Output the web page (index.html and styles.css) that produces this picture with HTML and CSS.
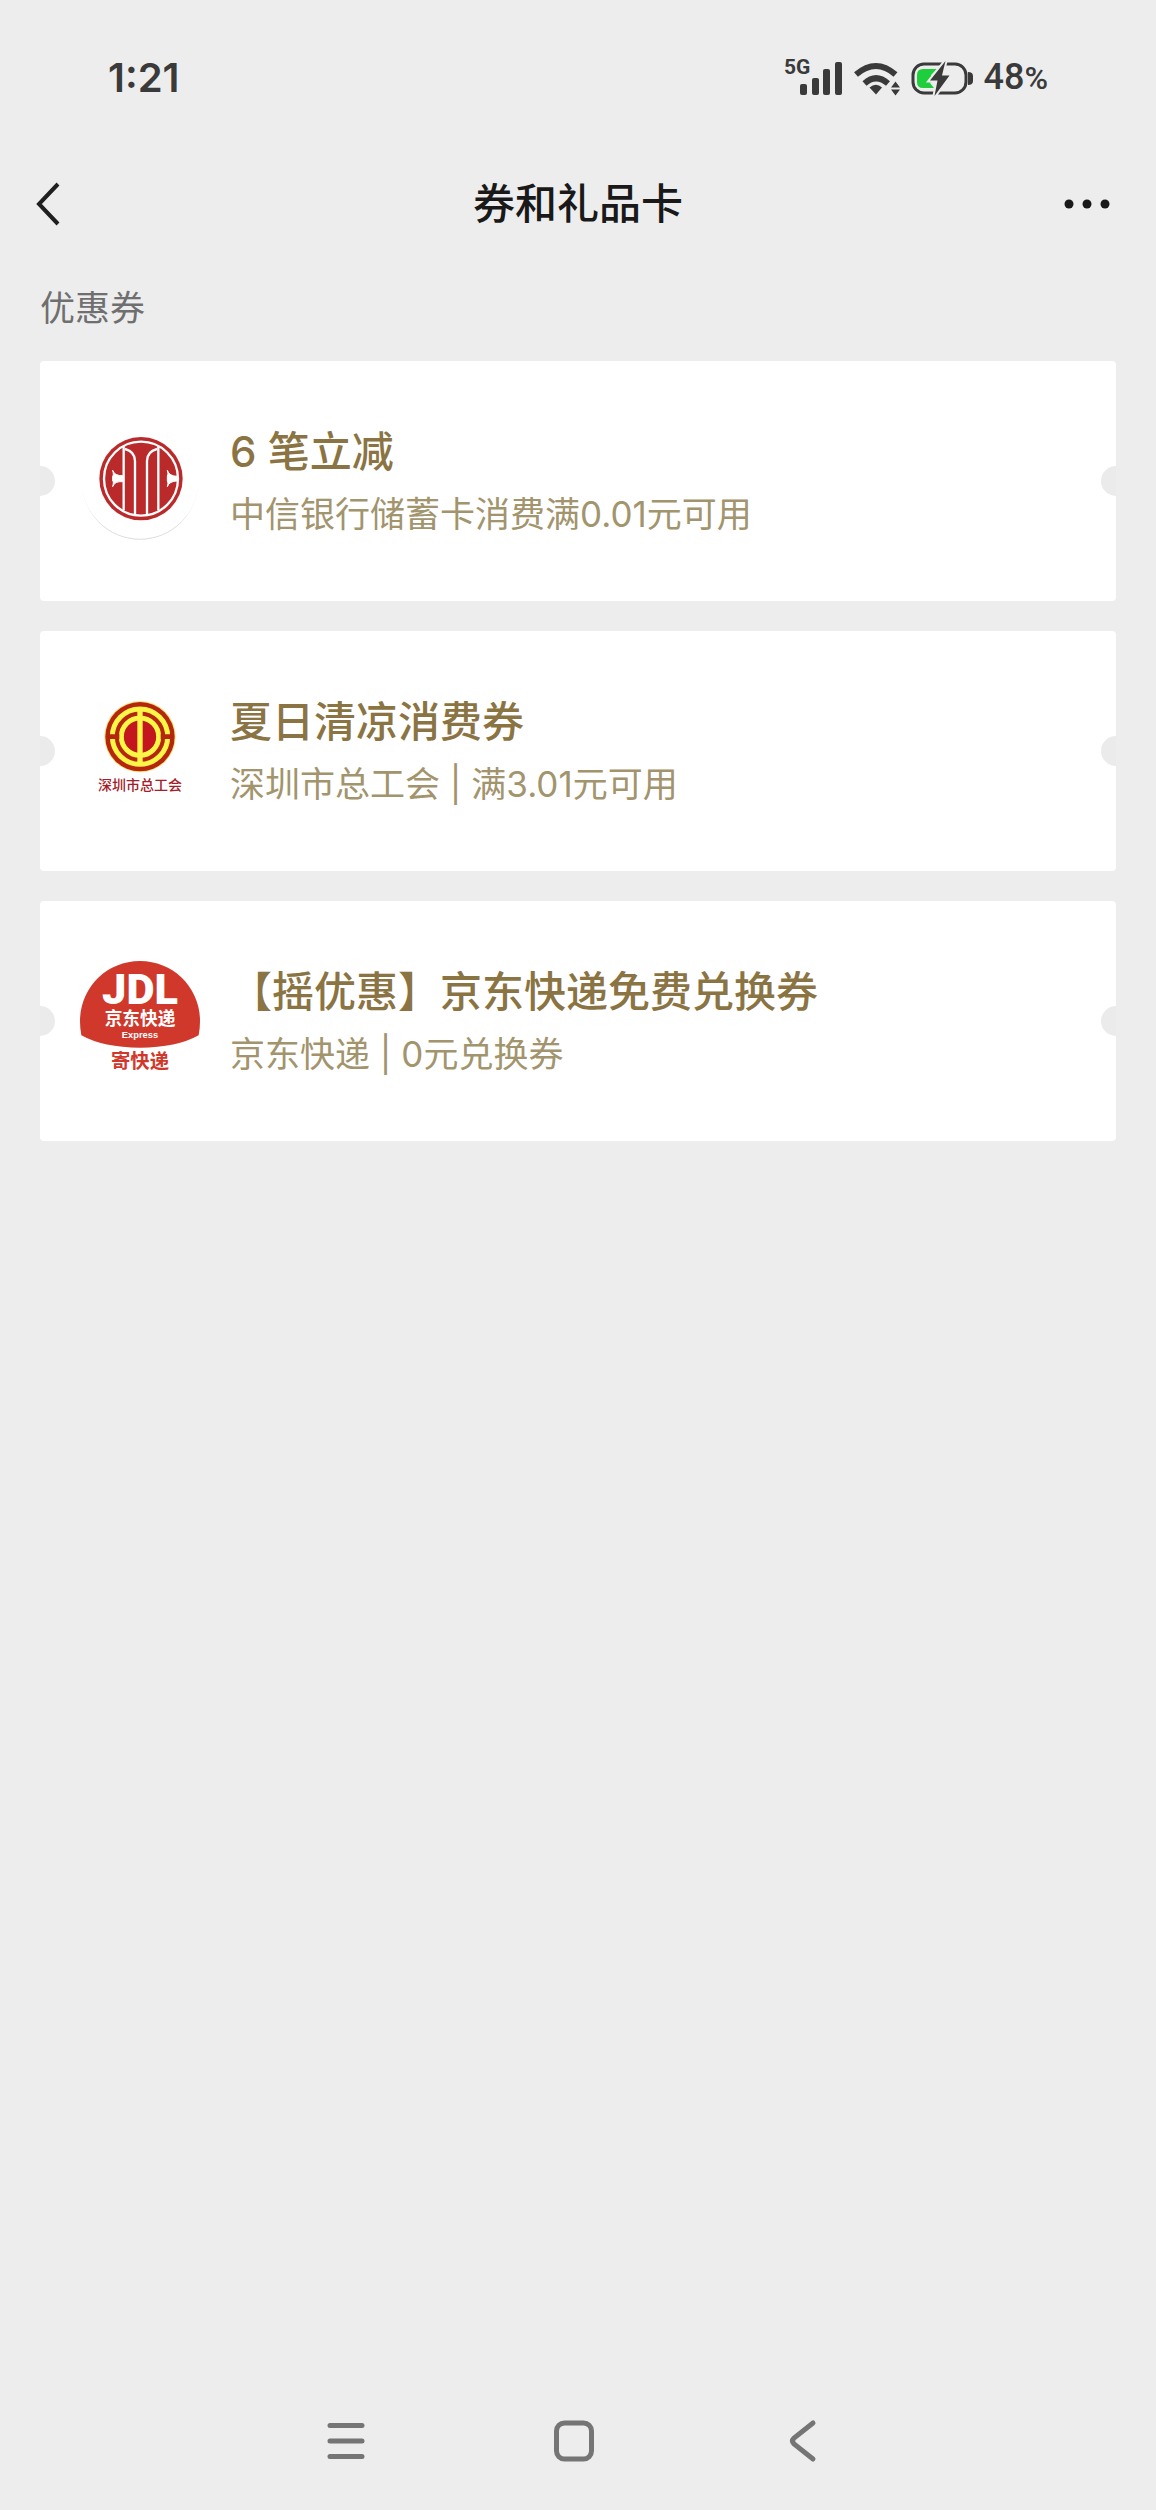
FILE: index.html
```html
<!DOCTYPE html>
<html lang="zh-CN">
<head>
    <meta charset="UTF-8">
    <meta name="viewport" content="width=device-width, initial-scale=1.0">
    <title>券和礼品卡</title>
    <link rel="stylesheet" href="styles.css">
</head>
<body>
    <div class="status-bar">
        <span class="time">1:21</span>
        <div class="status-icons">
            <svg width="58" height="42" viewBox="0 0 58 42" fill="#3a3a3a">
                <text class="network" x="0" y="18">5G</text>
                <rect x="16" y="28" width="7" height="11" rx="2"/>
                <rect x="28" y="22" width="7" height="17" rx="2"/>
                <rect x="39" y="13" width="7" height="26" rx="2"/>
                <rect x="51" y="6" width="7" height="33" rx="2"/>
            </svg>
            <svg width="48" height="42" viewBox="0 0 48 42" fill="#3a3a3a">
                <path d="M4 18.500Q24 1.500 43.500 18.500" fill="none" stroke="#3a3a3a" stroke-width="6"/>
                <path d="M12.500 27.500Q24 17 36 27.500" fill="none" stroke="#3a3a3a" stroke-width="6"/>
                <path d="M17.500 31.500Q24 26 30 31.500L24 38.500Z"/>
                <path d="M43.500 25.500L48 31.500H39Z M39 33.500H48L43.500 39.500Z"/>
            </svg>
            <svg width="64" height="42" viewBox="0 0 64 42">
                <rect x="3" y="8" width="53" height="29" rx="11" fill="none" stroke="#3a3a3a" stroke-width="3"/>
                <path d="M58 16Q63 16 63 20V25Q63 29 58 29Z" fill="#3a3a3a"/>
                <path d="M13 13H27L21 19L24 23L20 27L24 32H13Q7 32 7 26V19Q7 13 13 13Z" fill="#1fce3d"/>
                <path d="M35.500 5L20 24.500H27.500L24.500 40L39.500 19.500H32Z" fill="#3a3a3a" stroke="#ededed" stroke-width="4" paint-order="stroke"/>
            </svg>
            <span class="battery">48<small>%</small></span>
        </div>
    </div>

    <header class="header">
        <button class="icon-btn" aria-label="返回">
            <svg width="28" height="46" viewBox="0 0 28 46" fill="none" stroke="#1f1f1f" stroke-width="4">
                <path d="M23 3L4 23L23 43"/>
            </svg>
        </button>
        <h1>券和礼品卡</h1>
        <button class="icon-btn" aria-label="更多">
            <svg width="46" height="46" viewBox="0 0 46 46" fill="#191919">
                <circle cx="5" cy="23" r="4.500"/>
                <circle cx="23" cy="23" r="4.500"/>
                <circle cx="41" cy="23" r="4.500"/>
            </svg>
        </button>
    </header>

    <main class="content">
        <h2>优惠券</h2>
        <div class="coupons">
            <a class="coupon" href="#">
                <svg class="logo" viewBox="0 0 360 360">
                    <circle cx="180" cy="182" r="174" fill="#dcdcdc"/>
                    <circle cx="180" cy="177" r="176" fill="#fff"/>
                    <circle cx="183" cy="173" r="125" fill="#bb2a2b"/>
                    <g fill="none" stroke="#fff" stroke-width="7">
                        <circle cx="183" cy="173" r="111"/>
                        <path d="M131 76V268M235 76V268"/>
                        <path d="M135 84Q165 92 165 120V282M231 84Q201 92 201 120V282"/>
                    </g>
                    <path d="M98 148Q104 165 128 164V182Q104 180 98 197Q102 182 98 180V165Q102 163 98 148Z" fill="#fff" stroke="#fff" stroke-width="3"/>
                    <path d="M262 148Q268 166 293 166V180Q268 180 262 197Q266 184 262 180V165Q266 161 262 148Z" fill="#fff" stroke="#fff" stroke-width="3"/>
                </svg>
                <div class="info">
                    <h3>6 笔立减</h3>
                    <p>中信银行储蓄卡消费满0.01元可用</p>
                </div>
            </a>

            <a class="coupon" href="#">
                <svg class="logo" viewBox="0 0 360 360">
                    <circle cx="180" cy="137" r="107" fill="#fbe27a"/>
                    <circle cx="180" cy="137" r="104" fill="#b5260f"/>
                    <g fill="none" stroke="#fdf647" stroke-width="15">
                        <circle cx="180" cy="137" r="83"/>
                        <circle cx="180" cy="137" r="56"/>
                    </g>
                    <path d="M85 137H118M242 137H275" stroke="#b5260f" stroke-width="14"/>
                    <circle cx="180" cy="137" r="47" fill="#c3161f"/>
                    <path d="M180 55V220" stroke="#fdf647" stroke-width="16"/>
                    <text class="union" x="180" y="297">深圳市总工会</text>
                </svg>
                <div class="info">
                    <h3>夏日清凉消费券</h3>
                    <p>深圳市总工会 | 满3.01元可用</p>
                </div>
            </a>

            <a class="coupon" href="#">
                <svg class="logo" viewBox="0 0 360 360">
                    <path d="M180 0C280 0 360 80 360 180Q360 203 356 223Q290 260 180 260Q70 260 4 223Q0 203 0 180C0 80 80 0 180 0Z" fill="#d0382b"/>
                    <text class="jdl" x="180" y="130">JDL</text>
                    <text class="jd-name" x="180" y="193">京东快递</text>
                    <text class="jd-express" x="180" y="232">Express</text>
                    <text class="jd-send" x="180" y="320">寄快递</text>
                </svg>
                <div class="info">
                    <h3>【摇优惠】京东快递免费兑换券</h3>
                    <p>京东快递 | 0元兑换券</p>
                </div>
            </a>
        </div>
    </main>

    <nav class="nav-bar">
        <button class="icon-btn" aria-label="菜单">
            <svg width="44" height="44" viewBox="0 0 44 44" fill="none" stroke="#757575" stroke-width="5" stroke-linecap="round">
                <path d="M6 6.500H38M6 22H38M6 37.500H38"/>
            </svg>
        </button>
        <button class="icon-btn" aria-label="主屏幕">
            <svg width="44" height="44" viewBox="0 0 44 44" fill="none" stroke="#757575" stroke-width="5">
                <rect x="4.500" y="4" width="35" height="36" rx="8"/>
            </svg>
        </button>
        <button class="icon-btn" aria-label="返回">
            <svg width="44" height="44" viewBox="0 0 44 44" fill="none" stroke="#757575" stroke-width="5" stroke-linecap="round">
                <path d="M33 4L14 19Q11 22 14 25L33 40"/>
            </svg>
        </button>
    </nav>
</body>
</html>
```
FILE: styles.css
```css
* {
    box-sizing: border-box;
    margin: 0;
    padding: 0;
}

body {
    display: flex;
    flex-direction: column;
    min-height: 100vh;
    background-color: #ededed;
    font-family: Inter, "Noto Sans CJK SC", sans-serif;
}

svg {
    display: block;
    flex-shrink: 0;
    overflow: visible;
}

/* Status bar */
.status-bar {
    display: flex;
    justify-content: space-between;
    align-items: center;
    height: 154px;
    padding: 0 108px;
    color: #3a3a3a;
}

.time {
    font-size: 40px;
    font-weight: 600;
}

.status-icons {
    display: flex;
    align-items: center;
    gap: 10px;
    font-family: Roboto, sans-serif;
}

.network {
    font-size: 21px;
    font-weight: 700;
}

.battery {
    font-size: 36px;
    font-weight: 500;
}

.battery small {
    font-size: 32px;
}

/* Header */
.header {
    display: flex;
    justify-content: space-between;
    align-items: center;
    height: 100px;
    padding: 0 35px;
}

.header .icon-btn {
    width: 60px;
}

.header .icon-btn:last-child {
    justify-content: flex-end;
    padding-right: 11px;
}

.header h1 {
    color: #191919;
    font-size: 42px;
    font-weight: 500;
    line-height: 62px;
}

.icon-btn {
    display: flex;
    align-items: center;
    border: none;
    background: none;
    cursor: pointer;
}

/* Coupons */
.content {
    flex: 1;
    padding: 20px 40px;
}

.content h2 {
    margin-bottom: 18px;
    color: #6f6f6f;
    font-size: 35px;
    font-weight: 400;
    line-height: 69px;
}

.coupons {
    display: flex;
    flex-direction: column;
    gap: 30px;
}

.coupon {
    position: relative;
    display: flex;
    gap: 30px;
    height: 240px;
    padding: 60px 40px;
    overflow: hidden;
    border-radius: 4px;
    background-color: #fff;
    text-decoration: none;
}

/* Ticket notches */
.coupon::before,
.coupon::after {
    content: "";
    position: absolute;
    top: 105px;
    width: 30px;
    height: 30px;
    border-radius: 50%;
    background-color: #ebebeb;
}

.coupon::before {
    left: -15px;
}

.coupon::after {
    right: -15px;
}

.logo {
    width: 120px;
    height: 120px;
}

.logo text {
    text-anchor: middle;
}

.union {
    fill: #a3202a;
    font-family: "Liberation Serif", "Noto Sans CJK SC", serif;
    font-size: 42px;
    font-weight: 500;
}

.jdl {
    fill: #fff;
    font-family: Roboto, sans-serif;
    font-size: 130px;
    font-weight: 900;
}

.jd-name {
    fill: #fff;
    font-size: 53px;
    font-weight: 700;
}

.jd-express {
    fill: #fff;
    font-family: "Liberation Sans", sans-serif;
    font-size: 28px;
    font-weight: 700;
}

.jd-send {
    fill: #d0382b;
    font-size: 58px;
    font-weight: 700;
}

.info h3 {
    color: #8b7443;
    font-size: 42px;
    font-weight: 500;
    line-height: 62px;
}

.info p {
    color: #a2946d;
    font-size: 35px;
    font-weight: 400;
    line-height: 62px;
}

/* System navigation */
.nav-bar {
    display: flex;
    justify-content: center;
    align-items: center;
    gap: 184px;
    height: 138px;
    padding-right: 8px;
}
```
